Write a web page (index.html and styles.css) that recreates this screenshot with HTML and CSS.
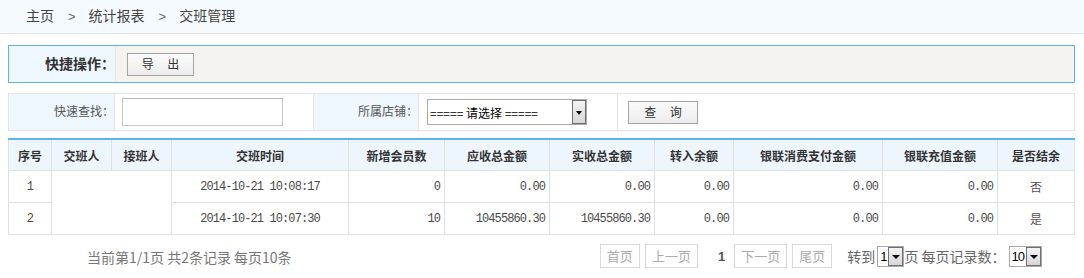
FILE: index.html
```html
<!DOCTYPE html>
<html lang="zh-CN">
<head>
    <meta charset="UTF-8">
    <title>交班管理</title>
    <link rel="stylesheet" href="styles.css">
</head>
<body>
    <!-- 面包屑 -->
    <div class="crumb">
        <span>主页</span><span class="sep">&gt;</span><span>统计报表</span><span class="sep">&gt;</span><span>交班管理</span>
    </div>

    <div class="main">
        <!-- 快捷操作 -->
        <div class="quick">
            <div class="quick-label">快捷操作：</div>
            <div class="quick-body">
                <button class="btn">导&nbsp;&nbsp;&nbsp;&nbsp;&nbsp;出</button>
            </div>
        </div>

        <!-- 查询条件 -->
        <div class="search">
            <div class="s-label">快速查找：</div>
            <div class="s-field"><input type="text" class="s-input"></div>
            <div class="s-label">所属店铺：</div>
            <div class="s-field s-shop">
                <div class="fake-select">
                    <span class="fs-text">===== 请选择 =====</span>
                    <span class="fs-arrow"></span>
                </div>
            </div>
            <div class="s-field s-last"><button class="btn btn-query">查&nbsp;&nbsp;&nbsp;&nbsp;&nbsp;询</button></div>
        </div>

        <!-- 列表 -->
        <table class="grid">
            <colgroup>
                <col style="width:43px"><col style="width:60px"><col style="width:60px"><col style="width:177px">
                <col style="width:96px"><col style="width:105px"><col style="width:105px"><col style="width:79px">
                <col style="width:149px"><col style="width:115px"><col style="width:77px">
            </colgroup>
            <thead>
                <tr>
                    <th>序号</th><th>交班人</th><th>接班人</th><th>交班时间</th><th>新增会员数</th><th>应收总金额</th>
                    <th>实收总金额</th><th>转入余额</th><th>银联消费支付金额</th><th>银联充值金额</th><th>是否结余</th>
                </tr>
            </thead>
            <tbody>
                <tr class="first">
                    <td class="c num">1</td><td class="blank b1"></td><td class="blank"></td>
                    <td class="c num">2014-10-21 10:08:17</td>
                    <td class="r num">0</td><td class="r num">0.00</td><td class="r num">0.00</td><td class="r num">0.00</td>
                    <td class="r num">0.00</td><td class="r num">0.00</td><td class="c">否</td>
                </tr>
                <tr>
                    <td class="c num">2</td><td class="blank b1"></td><td class="blank"></td>
                    <td class="c num">2014-10-21 10:07:30</td>
                    <td class="r num">10</td><td class="r num">10455860.30</td><td class="r num">10455860.30</td><td class="r num">0.00</td>
                    <td class="r num">0.00</td><td class="r num">0.00</td><td class="c">是</td>
                </tr>
            </tbody>
        </table>

        <!-- 分页 -->
        <div class="pager">
            <div class="pager-info">当前第1/1页 共2条记录 每页10条</div>
            <div class="pager-nav">
                <span class="pg">首页</span>
                <span class="pg">上一页</span>
                <span class="pg-cur">1</span>
                <span class="pg">下一页</span>
                <span class="pg">尾页</span>
                <span class="pg-text goto">转到</span>
                <span class="mini-select"><span class="ms-val">1</span><span class="ms-arrow"></span></span>
                <span class="pg-text">页 每页记录数：</span>
                <span class="mini-select wide"><span class="ms-val">10</span><span class="ms-arrow"></span></span>
            </div>
        </div>
    </div>
</body>
</html>
```

FILE: styles.css
```css
body { margin: 0; font-family: "Noto Sans CJK SC", "Liberation Sans", sans-serif; font-size: 12px; color: #333; background: #fff; }

.crumb { height: 33px; line-height: 31px; padding-left: 26px; background: #f5fafe; border-bottom: 1px solid #dfe3e6; font-size: 14px; color: #444; }
.crumb .sep { margin: 0 13px 0 14px; color: #666; font-family: "Liberation Sans", sans-serif; font-size: 13px; }

.main { margin: 11px 9px 0 8px; }

.quick { display: flex; height: 36px; border: 1px solid #5ab4ee; }
.quick-label { width: 106px; text-align: right; padding-right: 0; box-sizing: border-box; background: #eef7fe; font-size: 14px; font-weight: bold; line-height: 35px; color: #333; }
.quick-body { flex: 1; background: #f4f3ef; border-left: 1px solid #e6e6e6; display: flex; align-items: center; padding-left: 11px; }

.btn { width: 67px; height: 23px; padding: 0; border: 1px solid #a5a5a5; background: linear-gradient(#fbfbfb, #ececec); font-family: "Noto Sans CJK SC", sans-serif; font-size: 12px; color: #333; line-height: 20px; }
.btn-query { width: 70px; }

.search { display: grid; grid-template-columns: 106px 199px 105px 199px 1fr; height: 36px; margin-top: 10px; border: 1px solid #e3e3e3; }
.s-label { background: #eef7fe; border-right: 1px solid #e3e3e3; text-align: right; padding-right: 0; line-height: 34px; color: #555; }
.s-field { border-right: 1px solid #e3e3e3; display: flex; align-items: center; }
.s-shop { padding-left: 8px; }
.s-last { border-right: none; padding-left: 10px; }
.s-input { width: 161px; height: 28px; box-sizing: border-box; margin-left: 7px; border: 1px solid #c8c8c8; border-top-color: #b5b5b5; }

.fake-select { display: flex; width: 160px; height: 26px; box-sizing: border-box; border: 1px solid #a9a9a9; background: #fff; align-items: center; }
.fs-text { flex: 1; padding-left: 2px; font-size: 12px; color: #000; white-space: nowrap; }
.fs-arrow { position: relative; width: 14px; height: 24px; box-sizing: border-box; border: 1px solid #707070; background: linear-gradient(#f4f4f4, #d6d6d6); }
.fs-arrow::after { content: ""; position: absolute; left: 3px; top: 10px; border-left: 3px solid transparent; border-right: 3px solid transparent; border-top: 4px solid #000; }

.grid { width: 1067px; margin-top: 7px; border-collapse: collapse; table-layout: fixed; border-top: 2px solid #5ab4ee; }
.grid th, .grid td { border: 1px solid #e0e0e0; height: 31px; padding: 0 4px; overflow: hidden; white-space: nowrap; }
.grid th { height: 30px; background: #eef6fd; font-weight: bold; font-size: 12px; color: #333; border-top: none; }
.grid td { color: #555; font-size: 12px; }
.grid td.num { font-family: "Liberation Mono", monospace; font-size: 12px; letter-spacing: -0.9px; color: #4a4a4a; }
.grid .c { text-align: center; }
.grid .r { text-align: right; }
.grid td.blank { border-left-color: #fff; }
.grid td.b1 { border-right-color: #fff; }
.grid tr.first td.blank { border-bottom-color: #fff; }

.pager { display: flex; justify-content: space-between; align-items: center; height: 43px; margin-right: 33px; }
.pager-info { padding-left: 79px; font-size: 14px; color: #777; padding-top: 1px; }
.pager-nav { display: flex; align-items: center; font-size: 13px; color: #555; padding-bottom: 1px; }
.pg { display: inline-block; height: 22px; line-height: 21px; padding: 0 6px; border: 1px solid #dadada; color: #aaa; margin-right: 5px; }
.pg-cur { font-family: "Liberation Sans", sans-serif; font-weight: bold; margin: 0 9px 0 15px; color: #555; }
.pg-text { color: #666; white-space: pre; font-size: 14px; }
.goto { margin-left: 10px; margin-right: 2px; }
.mini-select { display: inline-flex; align-items: center; height: 21px; box-sizing: border-box; border: 1px solid #a9a9a9; background: #fff; }
.mini-select.wide { margin-left: 3px; }
.ms-val { font-family: "Liberation Sans", sans-serif; font-size: 13px; color: #000; padding: 0 1px 0 2px; }
.mini-select.wide .ms-val { letter-spacing: -1px; padding-right: 2px; }
.ms-arrow { position: relative; width: 15px; height: 19px; box-sizing: border-box; border: 1px solid #707070; background: linear-gradient(#f4f4f4, #d6d6d6); }
.ms-arrow::after { content: ""; position: absolute; left: 3px; top: 7px; border-left: 4px solid transparent; border-right: 4px solid transparent; border-top: 4px solid #000; }
```
